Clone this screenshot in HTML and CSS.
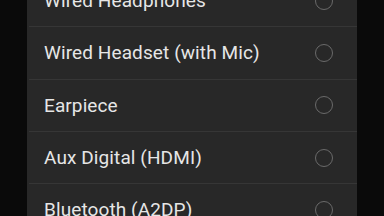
FILE: index.html
```html
<!DOCTYPE html>
<html lang="en">
<head>
    <meta charset="UTF-8">
    <meta name="viewport" content="width=device-width, initial-scale=1.0">
    <title>Audio Output</title>
    <link rel="stylesheet" href="styles.css">
</head>
<body>
    <div class="dialog">
        <ul class="options">
            <li class="option"><span class="label">Wired Headphones</span><span class="radio"></span></li>
            <li class="option"><span class="label">Wired Headset (with Mic)</span><span class="radio"></span></li>
            <li class="option"><span class="label">Earpiece</span><span class="radio"></span></li>
            <li class="option"><span class="label">Aux Digital (HDMI)</span><span class="radio"></span></li>
            <li class="option"><span class="label">Bluetooth (A2DP)</span><span class="radio"></span></li>
        </ul>
    </div>
</body>
</html>
```

FILE: styles.css
```css
:root {
    --color-backdrop: #0a0a0a;
    --color-dialog: #282828;
    --color-divider: #363636;
    --color-text: #e6e6e6;
    --color-radio: #6a6a6a;
}

html, body {
    margin: 0;
    padding: 0;
    height: 100%;
    overflow: hidden;
    background-color: var(--color-backdrop);
}

body {
    font-family: Roboto, 'Noto Sans', sans-serif;
    color: var(--color-text);
}

.dialog {
    width: 330px;
    margin: -25px 0 0 27px;
    background-color: var(--color-dialog);
}

.options {
    list-style: none;
    margin: 0;
    padding: 0 0 0 2px;
}

.option {
    display: flex;
    align-items: center;
    justify-content: space-between;
    height: 51.3px;
    padding: 0 24px 0 15px;
    border-bottom: 1px solid var(--color-divider);
    font-size: 19px;
    letter-spacing: 0.1px;
}

.radio {
    width: 16px;
    height: 16px;
    border: 1.5px solid var(--color-radio);
    border-radius: 50%;
}
```
